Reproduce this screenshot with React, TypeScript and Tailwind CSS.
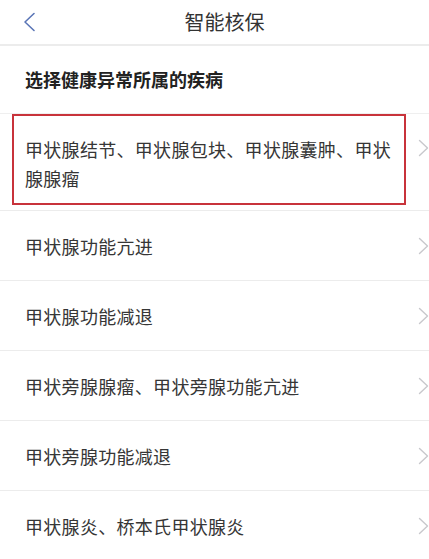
import React from "react";

const ITEMS = [
  "甲状腺功能亢进",
  "甲状腺功能减退",
  "甲状旁腺腺瘤、甲状旁腺功能亢进",
  "甲状旁腺功能减退",
  "甲状腺炎、桥本氏甲状腺炎",
];

function Chevron() {
  return (
    <svg width="11" height="18" viewBox="0 0 11 18" fill="none" className="shrink-0">
      <path d="M1.5 1.5 L9.5 9 L1.5 16.5" stroke="#c8c8cc" strokeWidth="1.4" strokeLinecap="round" strokeLinejoin="round" />
    </svg>
  );
}

export default function App() {
  return (
    <div
      className="w-[429px] h-[559px] overflow-hidden bg-white text-[#363636]"
      style={{ fontFamily: '"Noto Sans CJK SC", "Noto Sans", sans-serif' }}
    >
      {/* 顶部导航 */}
      <div className="h-[46px] flex items-center border-b-2 border-[#ececec]">
        <div className="w-[60px] pl-[23px] flex items-center">
          <svg width="13" height="20" viewBox="0 0 13 20" fill="none">
            <path d="M11 1.5 L2 10 L11 18.5" stroke="#5a75b6" strokeWidth="1.6" strokeLinecap="round" strokeLinejoin="round" />
          </svg>
        </div>
        <div className="flex-1 flex justify-center pr-[40px] text-[20px] leading-none text-[#333333]">
          智能核保
        </div>
      </div>

      <div className="h-[67px] flex items-center pl-[25px] text-[18px] font-bold text-[#222222]">
        选择健康异常所属的疾病
      </div>

      <div className="border-t border-[#efefef]">
        {/* 第一项（红框标注） */}
        <div className="h-[97px] flex items-start border-b border-[#ececec]">
          <div className="ml-[12px] w-[394px] h-[91px] border-2 border-[#c8333b] pl-[11px] pt-[19px] text-[18px] leading-[29px] tracking-[0.3px]">
            甲状腺结节、甲状腺包块、甲状腺囊肿、甲状腺腺瘤
          </div>
          <div className="flex-1 flex justify-end pt-[25px]">
            <Chevron />
          </div>
        </div>

        {ITEMS.map((t) => (
          <div key={t} className="h-[70px] flex items-center justify-between pl-[25px] border-b border-[#ececec]">
            <span className="text-[18px] leading-none tracking-[0.3px]">{t}</span>
            <Chevron />
          </div>
        ))}
      </div>
    </div>
  );
}
